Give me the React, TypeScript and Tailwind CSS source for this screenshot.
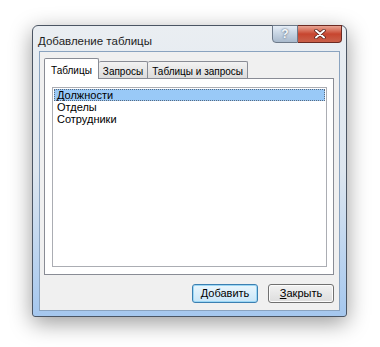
import React from 'react';

const items = ['Должности', 'Отделы', 'Сотрудники'];

function HelpButton() {
  return (
    <div className="w-[26px] h-[18px] rounded-bl-[4px] border border-[#6d7a8a] bg-gradient-to-b from-[#e6eef7] via-[#c5d3e2] to-[#a9bacd] flex items-center justify-center text-[12px] font-bold text-[#f4f7fb] [text-shadow:0_0_2px_#3c4b5e]">
      ?
    </div>
  );
}

function CloseButton() {
  return (
    <div className="w-[44px] h-[18px] rounded-br-[4px] border border-l-0 border-[#6b2a22] bg-gradient-to-b from-[#e8a493] via-[#c7452f] to-[#c9604a] flex items-center justify-center">
      <svg width="12" height="10" viewBox="0 0 12 10">
        <path d="M2 1.5 L10 8.5 M10 1.5 L2 8.5" stroke="#4a1a14" strokeWidth="3.4" strokeLinecap="round" />
        <path d="M2 1.5 L10 8.5 M10 1.5 L2 8.5" stroke="#ffffff" strokeWidth="2" strokeLinecap="round" />
      </svg>
    </div>
  );
}

export default function App() {
  return (
    <div className="w-[380px] h-[347px] bg-white pl-[32px] pt-[25px]" style={{ fontFamily: '"Liberation Sans", Arial, sans-serif' }}>
      {/* Window frame */}
      <div className="w-[315px] h-[292px] rounded-t-[6px] rounded-b-[3px] border border-[#4b5563] bg-gradient-to-b from-[#eaeef2] via-[#dde6ef] to-[#a5c7ee] shadow-[0_6px_22px_rgba(0,0,0,0.4)] flex flex-col">
        {/* Title bar */}
        <div className="h-[25px] flex items-start shrink-0">
          <div className="pl-[5px] pt-[7px] text-[11.5px] text-[#1e1e1e] flex-1">Добавление таблицы</div>
          <div className="flex mr-[4px] -mt-px">
            <HelpButton />
            <CloseButton />
          </div>
        </div>

        {/* Client area */}
        <div className="mx-[6px] mb-[5px] flex-1 border border-[#8aa3bf] bg-[#f0f0f0] px-[4px] pt-[5px] flex flex-col">
          {/* Tabs */}
          <div className="flex items-end h-[21px] text-[10px] text-black">
            <div className="h-[21px] px-[6px] pt-[4px] bg-white border border-b-0 border-[#898c95] rounded-t-[2px] relative z-10 -mb-px">Таблицы</div>
            <div className="h-[17px] px-[4px] pt-[2px] bg-gradient-to-b from-[#f2f2f2] to-[#dcdcdc] border border-l-0 border-b-0 border-[#898c95] rounded-t-[2px]">Запросы</div>
            <div className="h-[17px] px-[4px] pt-[2px] bg-gradient-to-b from-[#f2f2f2] to-[#dcdcdc] border border-l-0 border-b-0 border-[#898c95] rounded-t-[2px]">Таблицы и запросы</div>
          </div>

          {/* Tab panel */}
          <div className="w-[290px] h-[197px] border border-[#898c95] bg-white pt-[8px] pl-[7px] pr-[6px] pb-[7px] flex">
            <div className="flex-1 border border-[#abadb3] bg-white p-px text-[11px] text-black">
              {items.map((it, i) => (
                <div
                  key={it}
                  className={
                    i === 0
                      ? 'h-[12px] leading-[11px] pl-[2px] bg-[#99c9f7] border border-dotted border-[#5a6b80]'
                      : 'h-[12px] leading-[12px] pl-[3px]'
                  }
                >
                  {it}
                </div>
              ))}
            </div>
          </div>

          {/* Buttons */}
          <div className="flex justify-end gap-[10px] w-[290px] mt-[9px] text-[11px] text-black">
            <div className="w-[66px] h-[19px] rounded-[3px] border border-[#3c7fb1] shadow-[inset_0_0_0_1px_#9bd7f5] bg-gradient-to-b from-[#eaf6fd] to-[#c9e6f8] flex items-center justify-center">
              Добавить
            </div>
            <div className="w-[66px] h-[19px] rounded-[3px] border border-[#707070] shadow-[inset_0_0_0_1px_#fcfcfc] bg-gradient-to-b from-[#f2f2f2] to-[#dddddd] flex items-center justify-center">
              <span><span className="underline">З</span>акрыть</span>
            </div>
          </div>
        </div>
      </div>
    </div>
  );
}
